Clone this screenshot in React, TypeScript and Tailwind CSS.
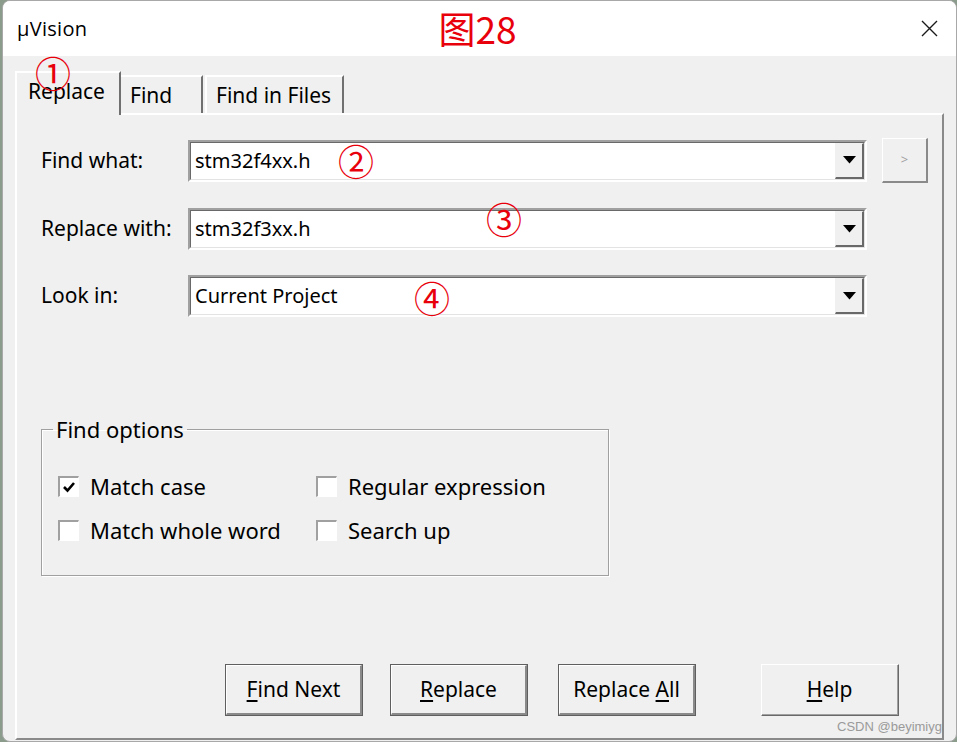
import React from "react";

const FONT = { fontFamily: '"Noto Sans", "Liberation Sans", sans-serif' };
const CJK = { fontFamily: '"Noto Sans CJK SC", "Noto Sans", sans-serif' };

function Combo({ value, annot }: { value: string; annot?: React.ReactNode }) {
  return (
    <div className="relative w-[679px] h-[42px] border-2 border-t-[#a0a0a0] border-l-[#a0a0a0] border-b-white border-r-white">
      <div className="flex h-full border-t border-l border-t-[#696969] border-l-[#696969] border-b border-r border-b-[#e3e3e3] border-r-[#e3e3e3] bg-white">
        <div className="flex-1 flex items-center pl-[4px] text-[20px] text-black">{value}</div>
        <div className="w-[29px] flex items-center justify-center bg-[#f0f0f0] border-t border-l border-t-[#f0f0f0] border-l-[#f0f0f0] border-r-2 border-b-2 border-r-[#696969] border-b-[#696969]">
          <svg width="13" height="8" viewBox="0 0 13 8">
            <path d="M0 0 H13 L6.5 7.5 Z" fill="#000" />
          </svg>
        </div>
      </div>
      {annot}
    </div>
  );
}

function Check({ checked, label }: { checked?: boolean; label: string }) {
  return (
    <div className="flex items-center gap-[11px] h-[20px]">
      <div className="w-[21px] h-[21px] border-t-2 border-l-2 border-t-[#a0a0a0] border-l-[#a0a0a0] border-b border-r border-b-white border-r-white bg-white flex items-center justify-center">
        {checked && (
          <svg width="14" height="14" viewBox="0 0 14 14">
            <path d="M2 7 L5.5 10.5 L12 3" stroke="#000" strokeWidth="2.6" fill="none" />
          </svg>
        )}
      </div>
      <span className="text-[22px] text-black leading-none">{label}</span>
    </div>
  );
}

function Btn({ children, def, className }: { children: React.ReactNode; def?: boolean; className?: string }) {
  if (def) {
    return (
      <div className={"w-[138px] h-[52px] border border-[#5f5f5f] " + (className || "")}>
        <div className="w-full h-full border-t border-l border-white border-r-2 border-b-2 border-r-[#8a8a8a] border-b-[#8a8a8a] flex items-center justify-center text-[21px] text-black bg-[#f0f0f0]">
          {children}
        </div>
      </div>
    );
  }
  return (
    <div className={"w-[138px] h-[52px] border-t border-l border-t-white border-l-white border-r border-b border-r-[#696969] border-b-[#696969] " + (className || "")}>
      <div className="w-full h-full border-r border-b border-r-[#a0a0a0] border-b-[#a0a0a0] flex items-center justify-center text-[21px] text-black bg-[#f0f0f0]">
        {children}
      </div>
    </div>
  );
}

function Circ({ ch, className }: { ch: string; className: string }) {
  return (
    <span className={"absolute text-[#e8000b] text-[36px] leading-none " + className} style={CJK}>
      {ch}
    </span>
  );
}

export default function App() {
  return (
    <div className="w-[957px] h-[742px] bg-[#8c9c8c]" style={FONT}>
      <div className="relative w-[955px] h-[742px] ml-[2px] flex flex-col bg-[#f0f0f0] rounded-[8px] border border-[#a8a8a8] overflow-hidden">
        {/* Title bar */}
        <div className="h-[55px] bg-white grid grid-cols-[1fr_auto_1fr] items-center pl-[14px] pr-[18px]">
          <span className="text-[20px] text-black tracking-[0.3px]" style={{ fontFamily: '"Open Sans", "Noto Sans", sans-serif' }}>
            μVision
          </span>
          <span className="text-[#e8000b] text-[37px] leading-none" style={CJK}>
            图28
          </span>
          <div className="flex justify-end">
            <svg width="17" height="17" viewBox="0 0 17 17">
              <path d="M1 1 L16 16 M16 1 L1 16" stroke="#1a1a1a" strokeWidth="1.4" />
            </svg>
          </div>
        </div>

        {/* Body */}
        <div className="flex-1 flex flex-col pl-[12px] pr-[12px] pt-[15px] pb-[1px]">
          {/* Tabs */}
          <div className="flex items-end h-[42px] relative z-10">
            <div className="relative w-[106px] h-[44px] -mb-[2px] bg-[#f0f0f0] border-t-2 border-l-2 border-white border-r-2 border-r-[#707070] flex items-start pt-[3px] pl-[11px]">
              <span className="text-[21px] text-black">Replace</span>
              <Circ ch="①" className="left-[18px] top-[-19px]" />
            </div>
            <div className="w-[82px] h-[38px] border-t-2 border-white border-r-2 border-r-[#707070] flex items-start pt-[3px] pl-[9px]">
              <span className="text-[21px] text-black">Find</span>
            </div>
            <div className="w-[139px] h-[38px] ml-[2px] border-t-2 border-l-2 border-white border-r-2 border-r-[#707070] flex items-start pt-[3px] pl-[9px]">
              <span className="text-[21px] text-black">Find in Files</span>
            </div>
          </div>

          {/* Panel */}
          <div className="flex-1 flex flex-col border-t-2 border-l-2 border-white border-r-2 border-b-2 border-r-[#8a8a8a] border-b-[#8a8a8a] pl-[24px] pt-[23px] pb-[22px]">
            <div className="flex flex-col gap-[25px]">
              <div className="flex items-center">
                <span className="w-[147px] text-[21px] text-black">Find what:</span>
                <Combo value="stm32f4xx.h" annot={<Circ ch="②" className="left-[148px] top-[0px]" />} />
                <div className="ml-[15px] w-[46px] h-[45px] border-t border-l border-white border-r-2 border-b-2 border-r-[#8a8a8a] border-b-[#8a8a8a] flex items-center justify-center text-[13px] text-[#a0a0a0]">
                  &gt;
                </div>
              </div>
              <div className="flex items-center">
                <span className="w-[147px] text-[21px] text-black">Replace with:</span>
                <Combo value="stm32f3xx.h" annot={<Circ ch="③" className="left-[296px] top-[-10px]" />} />
              </div>
              <div className="flex items-center">
                <span className="w-[147px] text-[21px] text-black">Look in:</span>
                <Combo value="Current Project" annot={<Circ ch="④" className="left-[224px] top-[2px]" />} />
              </div>
            </div>

            <fieldset className="mt-[101px] w-[568px] h-[158px] border border-[#a0a0a0] shadow-[inset_1px_1px_0_#fff,1px_1px_0_#fff] pl-[16px]">
              <legend className="ml-[-5px] px-[3px] text-[22px] text-black leading-[22px]">Find options</legend>
              <div className="grid grid-cols-[258px_1fr] gap-y-[24px] mt-[36px]">
                <Check checked label="Match case" />
                <Check label="Regular expression" />
                <Check label="Match whole word" />
                <Check label="Search up" />
              </div>
            </fieldset>

            <div className="mt-auto flex items-center">
              <Btn def className="ml-[184px]">
                <span><u className="underline-offset-[3px]">F</u>ind Next</span>
              </Btn>
              <Btn def className="ml-[27px]">
                <span><u className="underline-offset-[3px]">R</u>eplace</span>
              </Btn>
              <Btn def className="ml-[30px]">
                <span>Replace <u className="underline-offset-[3px]">A</u>ll</span>
              </Btn>
              <Btn className="ml-[65px]">
                <span><u className="underline-offset-[3px]">H</u>elp</span>
              </Btn>
            </div>
          </div>
        </div>

        <span className="absolute right-[14px] bottom-[8px] text-[13px] text-[#9a9a9a] leading-none" style={{ fontFamily: '"Liberation Sans", Arial, sans-serif' }}>
          CSDN @beyimiyg
        </span>
      </div>
    </div>
  );
}
